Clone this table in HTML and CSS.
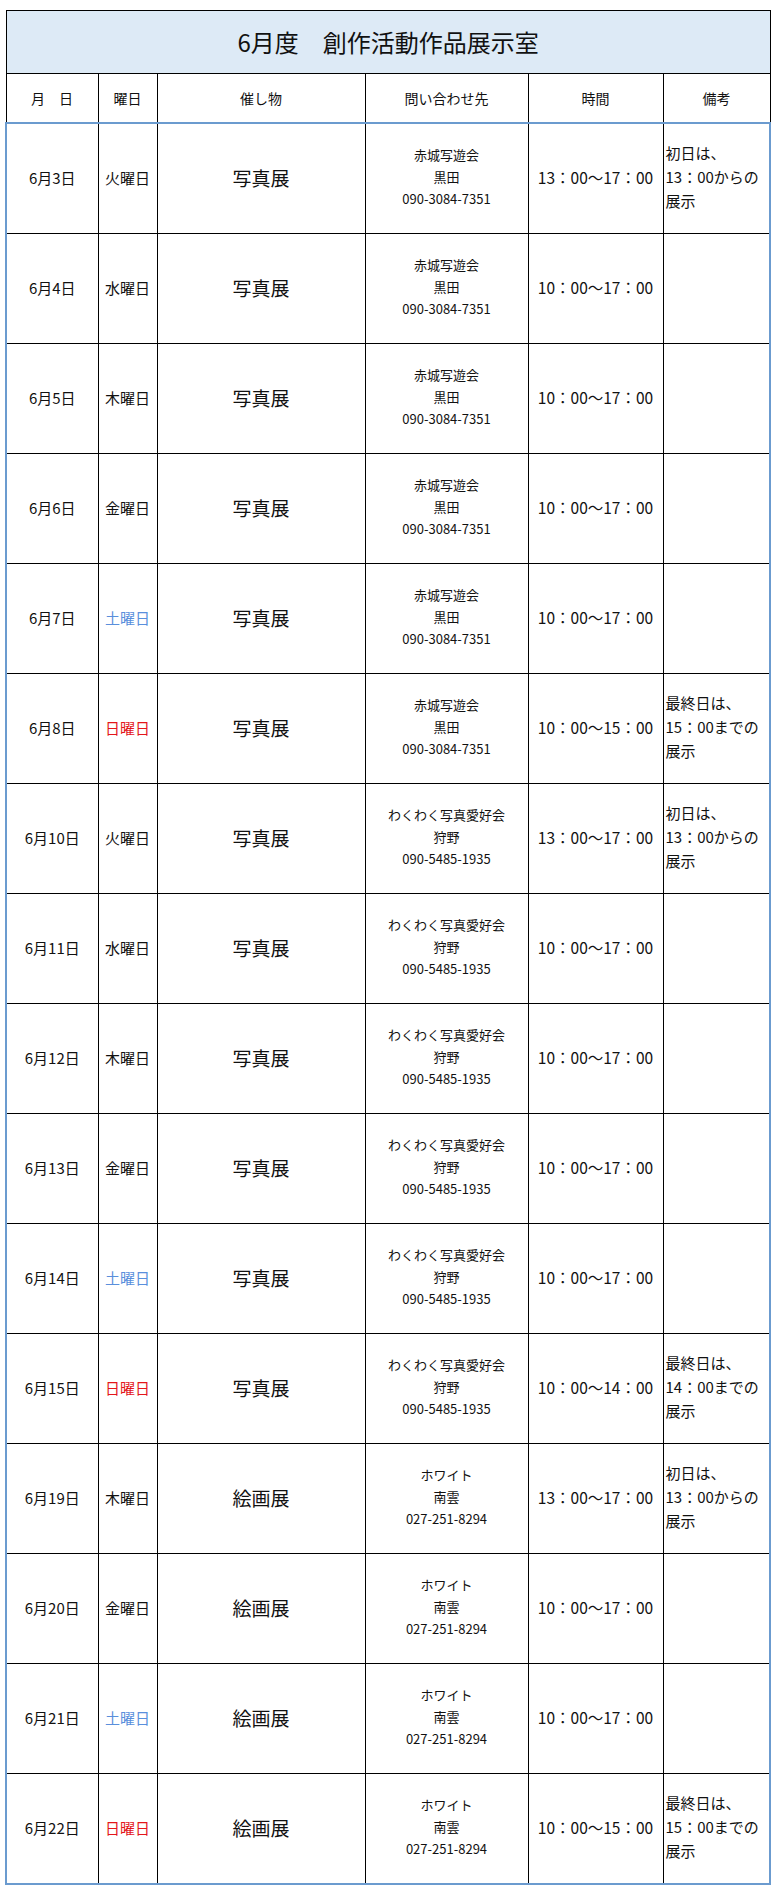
FILE: index.html
```html
<!DOCTYPE html>
<html lang="ja">
<head>
<meta charset="utf-8">
<title>6月度 創作活動作品展示室</title>
<link rel="stylesheet" href="styles.css">
</head>
<body>
<table class="schedule">
  <colgroup>
    <col class="c-date"><col class="c-day"><col class="c-event"><col class="c-contact"><col class="c-time"><col class="c-note">
  </colgroup>
  <thead>
    <tr class="title-row"><th colspan="6" class="title">6月度　創作活動作品展示室</th></tr>
    <tr class="head-row">
      <th>月　日</th><th>曜日</th><th>催し物</th><th>問い合わせ先</th><th>時間</th><th>備考</th>
    </tr>
  </thead>
  <tbody>
    <tr><td class="date">6月3日</td><td class="day">火曜日</td><td class="event">写真展</td><td class="contact">赤城写遊会<br>黒田<br>090-3084-7351</td><td class="time">13：00～17：00</td><td class="note">初日は、<br>13：00からの<br>展示</td></tr>
    <tr><td class="date">6月4日</td><td class="day">水曜日</td><td class="event">写真展</td><td class="contact">赤城写遊会<br>黒田<br>090-3084-7351</td><td class="time">10：00～17：00</td><td class="note"></td></tr>
    <tr><td class="date">6月5日</td><td class="day">木曜日</td><td class="event">写真展</td><td class="contact">赤城写遊会<br>黒田<br>090-3084-7351</td><td class="time">10：00～17：00</td><td class="note"></td></tr>
    <tr><td class="date">6月6日</td><td class="day">金曜日</td><td class="event">写真展</td><td class="contact">赤城写遊会<br>黒田<br>090-3084-7351</td><td class="time">10：00～17：00</td><td class="note"></td></tr>
    <tr><td class="date">6月7日</td><td class="day sat">土曜日</td><td class="event">写真展</td><td class="contact">赤城写遊会<br>黒田<br>090-3084-7351</td><td class="time">10：00～17：00</td><td class="note"></td></tr>
    <tr><td class="date">6月8日</td><td class="day sun">日曜日</td><td class="event">写真展</td><td class="contact">赤城写遊会<br>黒田<br>090-3084-7351</td><td class="time">10：00～15：00</td><td class="note">最終日は、<br>15：00までの<br>展示</td></tr>
    <tr><td class="date">6月10日</td><td class="day">火曜日</td><td class="event">写真展</td><td class="contact">わくわく写真愛好会<br>狩野<br>090-5485-1935</td><td class="time">13：00～17：00</td><td class="note">初日は、<br>13：00からの<br>展示</td></tr>
    <tr><td class="date">6月11日</td><td class="day">水曜日</td><td class="event">写真展</td><td class="contact">わくわく写真愛好会<br>狩野<br>090-5485-1935</td><td class="time">10：00～17：00</td><td class="note"></td></tr>
    <tr><td class="date">6月12日</td><td class="day">木曜日</td><td class="event">写真展</td><td class="contact">わくわく写真愛好会<br>狩野<br>090-5485-1935</td><td class="time">10：00～17：00</td><td class="note"></td></tr>
    <tr><td class="date">6月13日</td><td class="day">金曜日</td><td class="event">写真展</td><td class="contact">わくわく写真愛好会<br>狩野<br>090-5485-1935</td><td class="time">10：00～17：00</td><td class="note"></td></tr>
    <tr><td class="date">6月14日</td><td class="day sat">土曜日</td><td class="event">写真展</td><td class="contact">わくわく写真愛好会<br>狩野<br>090-5485-1935</td><td class="time">10：00～17：00</td><td class="note"></td></tr>
    <tr><td class="date">6月15日</td><td class="day sun">日曜日</td><td class="event">写真展</td><td class="contact">わくわく写真愛好会<br>狩野<br>090-5485-1935</td><td class="time">10：00～14：00</td><td class="note">最終日は、<br>14：00までの<br>展示</td></tr>
    <tr><td class="date">6月19日</td><td class="day">木曜日</td><td class="event">絵画展</td><td class="contact">ホワイト<br>南雲<br>027-251-8294</td><td class="time">13：00～17：00</td><td class="note">初日は、<br>13：00からの<br>展示</td></tr>
    <tr><td class="date">6月20日</td><td class="day">金曜日</td><td class="event">絵画展</td><td class="contact">ホワイト<br>南雲<br>027-251-8294</td><td class="time">10：00～17：00</td><td class="note"></td></tr>
    <tr><td class="date">6月21日</td><td class="day sat">土曜日</td><td class="event">絵画展</td><td class="contact">ホワイト<br>南雲<br>027-251-8294</td><td class="time">10：00～17：00</td><td class="note"></td></tr>
    <tr><td class="date">6月22日</td><td class="day sun">日曜日</td><td class="event">絵画展</td><td class="contact">ホワイト<br>南雲<br>027-251-8294</td><td class="time">10：00～15：00</td><td class="note">最終日は、<br>15：00までの<br>展示</td></tr>
  </tbody>
</table>
</body>
</html>
```

FILE: styles.css
```css
html, body {
  margin: 0;
  padding: 0;
  background: #ffffff;
}

body {
  font-family: "Noto Sans CJK JP", "Noto Sans", sans-serif;
  color: #111111;
}

.schedule {
  margin: 10px 0 0 5px;
  width: 765px;
  border-collapse: collapse;
  table-layout: fixed;
}

.c-date { width: 92px; }
.c-day { width: 59px; }
.c-event { width: 208px; }
.c-contact { width: 163px; }
.c-time { width: 135px; }
.c-note { width: 107px; }

.schedule th,
.schedule td {
  border: 1px solid #000000;
  padding: 0;
  text-align: center;
  vertical-align: middle;
  font-weight: normal;
}

.title-row .title {
  height: 62px;
  background: #ddeaf6;
  font-size: 24px;
  line-height: 30px;
}

.head-row th {
  height: 48px;
  font-size: 14px;
  line-height: 20px;
}

.schedule tbody {
  border: 2px solid #6b9bcf;
}

.schedule tbody td {
  height: 106px;
  padding-bottom: 3px;
}

.date {
  font-size: 15px;
}

.day {
  font-size: 15px;
}

.day.sat { color: #5a8fdc; }
.day.sun { color: #e3161c; }

.event {
  font-size: 19px;
}

.contact {
  font-size: 13px;
  line-height: 22px;
}

.time {
  font-size: 15.5px;
  white-space: nowrap;
}

.schedule td.note {
  text-align: left;
  font-size: 15px;
  line-height: 24px;
  padding-left: 2px;
  white-space: nowrap;
}
```
